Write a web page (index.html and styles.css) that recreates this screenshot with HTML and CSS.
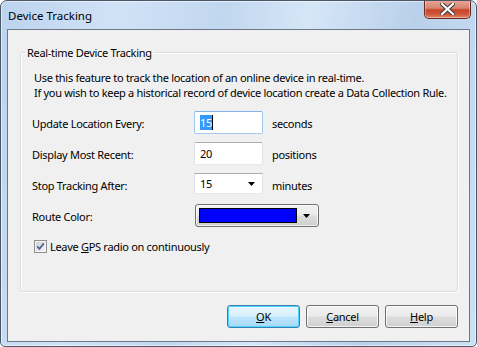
FILE: index.html
```html
<!DOCTYPE html>
<html>
<head>
<meta charset="utf-8">
<link rel="stylesheet" href="styles.css">
</head>
<body>
<div class="window">
  <div class="titlebar">
    <span class="title">Device Tracking</span>
    <div class="close">
      <svg width="15" height="12" viewBox="0 0 15 12">
        <path d="M2 1 L13 11 M13 1 L2 11" stroke="#3b3b3b" stroke-width="4.2" stroke-linecap="square" fill="none"/>
        <path d="M2 1 L13 11 M13 1 L2 11" stroke="#ffffff" stroke-width="2.2" stroke-linecap="square" fill="none"/>
      </svg>
    </div>
  </div>
  <div class="client">
    <fieldset class="group">
      <legend>Real-time Device Tracking</legend>
      <p class="desc">Use this feature to track the location of an online device in real-time.<br>If you wish to keep a historical record of device location create a Data Collection Rule.</p>
      <div class="form">
        <span class="label">Update Location Every:</span>
        <div class="textbox focused"><span class="selected">15</span><span class="caret"></span></div>
        <span class="unit">seconds</span>

        <span class="label">Display Most Recent:</span>
        <div class="textbox">20</div>
        <span class="unit">positions</span>

        <span class="label">Stop Tracking After:</span>
        <div class="combo"><span>15</span><svg class="arrow" width="7" height="4" viewBox="0 0 7 4"><polygon points="0,0 7,0 3.5,4" fill="#000"/></svg></div>
        <span class="unit">minutes</span>

        <span class="label">Route Color:</span>
        <div class="colorpick"><span class="swatch"></span><svg class="arrow" width="7" height="4" viewBox="0 0 7 4"><polygon points="0,0 7,0 3.5,4" fill="#000"/></svg></div>
      </div>
      <div class="check">
        <span class="box"><svg width="11" height="11" viewBox="0 0 11 11"><path d="M2.2 5.2 L4.4 7.8 L8.8 2.4" stroke="#4a6199" stroke-width="1.7" fill="none"/></svg></span>
        <span>Leave <u>G</u>PS radio on continuously</span>
      </div>
    </fieldset>
    <div class="buttons">
      <div class="btn default"><u>O</u>K</div>
      <div class="btn"><u>C</u>ancel</div>
      <div class="btn"><u>H</u>elp</div>
    </div>
  </div>
</div>
</body>
</html>
```
FILE: styles.css
```css
html, body {
  margin: 0;
  padding: 0;
  background: #ffffff;
}
body {
  font-family: "Segoe UI", "Noto Sans", sans-serif;
  font-size: 11px;
  letter-spacing: -0.3px;
  line-height: 15px;
  color: #000;
}
.window {
  width: 477px;
  height: 347px;
  box-sizing: border-box;
  border: 1px solid #4a5766;
  border-radius: 7px 7px 5px 5px;
  background: linear-gradient(100deg, #bcd3ee 0%, #d0e2f6 22%, #c1d7ef 42%, #d5e6f7 58%, #b9d0eb 78%, #cde0f4 100%);
  box-shadow: inset 0 0 0 1px rgba(255,255,255,0.55);
  display: flex;
  flex-direction: column;
  overflow: hidden;
}
.titlebar {
  height: 28px;
  display: flex;
  align-items: flex-start;
  flex: none;
}
.title {
  padding: 7px 0 0 7px;
  font-size: 11.5px;
  letter-spacing: 0;
  color: #000;
}
.close {
  margin: -1px 5px 0 auto;
  width: 47px;
  height: 19px;
  box-sizing: border-box;
  border: 1px solid #6b2a20;
  border-top: none;
  border-radius: 0 0 5px 5px;
  background: linear-gradient(#e9a899 0%, #d88472 45%, #c7432a 55%, #d0583c 80%, #e08a6e 100%);
  box-shadow: inset 0 0 0 1px rgba(255,255,255,0.35);
  display: flex;
  align-items: center;
  justify-content: center;
}
.client {
  flex: 1;
  margin: 0 6px 4px 6px;
  border: 1px solid #6a7889;
  background: #f0f0f0;
  display: flex;
  flex-direction: column;
}
.group {
  margin: 15px 11px 0 12px;
  padding: 0;
  height: 247px;
  box-sizing: border-box;
  border: 1px solid #d5dfe5;
  border-radius: 3px;
  box-shadow: inset 1px 1px 0 #ffffff, 1px 1px 0 #ffffff;
  min-width: 0;
}
.group legend {
  margin-left: 4px;
  padding: 0 2px;
  line-height: 15px;
}
.desc {
  margin: 10px 0 0 13px;
  line-height: 15px;
}
.form {
  margin: 11px 0 0 11px;
  display: grid;
  grid-template-columns: 162px 69px auto;
  grid-auto-rows: 23px;
  row-gap: 8px;
  align-items: center;
}
.label {
  padding-top: 1px;
}
.textbox {
  height: 23px;
  box-sizing: border-box;
  border: 1px solid #e2e3ea;
  border-top-color: #abadb3;
  border-bottom-color: #e3e9ef;
  border-radius: 2px;
  background: #fff;
  padding: 3px 0 0 5px;
  display: flex;
  align-items: flex-start;
}
.textbox.focused {
  border-color: #a3c8ef;
  border-top-color: #7eb4ea;
}
.selected {
  background: #3399ff;
  color: #fff;
}
.caret {
  width: 1px;
  height: 15px;
  background: #000;
}
.unit {
  margin-left: 9px;
  padding-top: 2px;
}
.combo {
  align-self: start;
  height: 21px;
  box-sizing: border-box;
  border: 1px solid #e2e3ea;
  border-top-color: #abadb3;
  border-bottom-color: #e3e9ef;
  background: #fff;
  padding: 2px 0 0 5px;
  display: flex;
  align-items: flex-start;
}
.combo span {
  flex: 1;
}
.combo .arrow {
  margin: 6px 7px 0 0;
}
.colorpick {
  grid-column: 2 / 4;
  width: 124px;
  height: 23px;
  margin-left: 1px;
  box-sizing: border-box;
  border: 1px solid #707070;
  border-radius: 3px;
  background: linear-gradient(#f2f2f2 0%, #ebebeb 48%, #dddddd 52%, #cfcfcf 100%);
  box-shadow: inset 0 0 0 1px rgba(255,255,255,0.7);
  display: flex;
  align-items: center;
  padding-left: 3px;
}
.swatch {
  width: 98px;
  height: 15px;
  box-sizing: border-box;
  border: 1px solid #000;
  background: #0000ff;
}
.colorpick .arrow {
  margin-left: 6px;
}
.check {
  margin: 12px 0 0 13px;
  display: flex;
  align-items: center;
  gap: 3px;
}
.box {
  width: 13px;
  height: 13px;
  box-sizing: border-box;
  border: 1px solid #8e8f8f;
  background: linear-gradient(135deg, #cfcfcf, #f7f7f7);
  box-shadow: inset 0 0 0 1px #f4f4f4;
  display: flex;
  align-items: center;
  justify-content: center;
}
.box svg {
  display: block;
}
.buttons {
  margin: 13px 11px 0 0;
  display: flex;
  justify-content: flex-end;
  gap: 6px;
}
.btn {
  width: 73px;
  height: 23px;
  box-sizing: border-box;
  border: 1px solid #707070;
  border-radius: 3px;
  background: linear-gradient(#f2f2f2 0%, #ebebeb 48%, #dddddd 52%, #cfcfcf 100%);
  box-shadow: inset 0 0 0 1px rgba(255,255,255,0.75);
  display: flex;
  align-items: center;
  justify-content: center;
}
.btn.default {
  border-color: #3c7fb1;
  background: linear-gradient(#eaf6fd 0%, #d9f0fc 48%, #bee6fd 52%, #a7d9f5 100%);
  box-shadow: inset 0 0 0 1px #48d5ff;
}
```
